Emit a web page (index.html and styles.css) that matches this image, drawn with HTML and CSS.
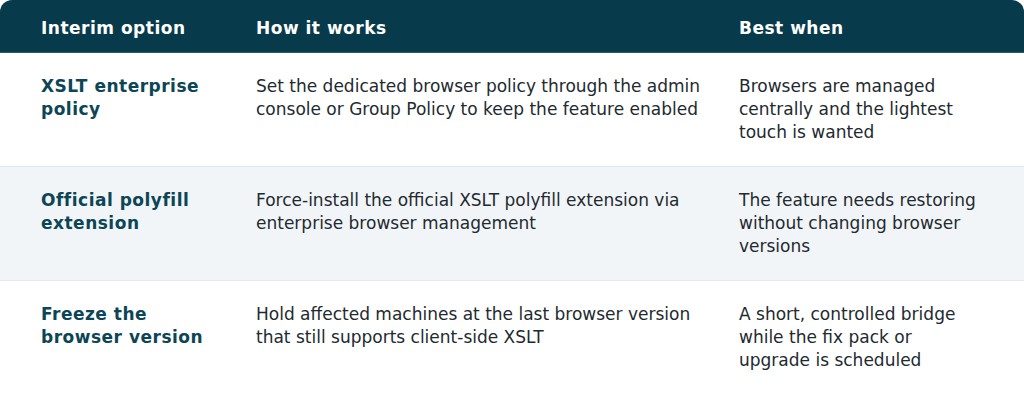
FILE: index.html
```html
<!DOCTYPE html>
<html lang="en">
<head>
    <meta charset="UTF-8">
    <meta name="viewport" content="width=device-width, initial-scale=1.0">
    <title>Interim options</title>
    <link rel="stylesheet" href="styles.css">
</head>
<body>
    <div class="options-table">
        <table>
            <colgroup>
                <col class="col-option">
                <col class="col-how">
                <col class="col-best">
            </colgroup>
            <thead>
                <tr>
                    <th>Interim option</th>
                    <th>How it works</th>
                    <th>Best when</th>
                </tr>
            </thead>
            <tbody>
                <tr>
                    <td class="option-name">XSLT enterprise policy</td>
                    <td>Set the dedicated browser policy through the admin console or Group Policy to keep the feature enabled</td>
                    <td>Browsers are managed centrally and the lightest touch is wanted</td>
                </tr>
                <tr class="alt">
                    <td class="option-name">Official polyfill extension</td>
                    <td>Force-install the official XSLT polyfill extension via enterprise browser management</td>
                    <td>The feature needs restoring without changing browser versions</td>
                </tr>
                <tr>
                    <td class="option-name">Freeze the browser version</td>
                    <td>Hold affected machines at the last browser version that still supports client-side XSLT</td>
                    <td>A short, controlled bridge while the fix pack or upgrade is scheduled</td>
                </tr>
            </tbody>
        </table>
    </div>
</body>
</html>
```

FILE: styles.css
```css
body {
    margin: 0;
    padding: 0;
    background: #ffffff;
    font-family: "DejaVu Sans", sans-serif;
    font-size: 17px;
    color: #222a30;
}
.options-table {
    border-radius: 12px 12px 0 0;
    overflow: hidden;
}
table {
    width: 100%;
    border-collapse: collapse;
    table-layout: fixed;
}
.col-option {
    width: 256px;
}
.col-how {
    width: 483px;
}
.col-best {
    width: 285px;
}
th,
td {
    text-align: left;
    vertical-align: top;
    line-height: 23px;
    padding: 22px 30px 22px 0;
}
th:first-child,
td:first-child {
    padding-left: 41px;
}
th:last-child,
td:last-child {
    padding-right: 42px;
}
thead th {
    background: #073a4b;
    color: #ffffff;
    font-weight: bold;
    letter-spacing: 0.5px;
    padding-top: 17px;
    padding-bottom: 12px;
    border-bottom: 1px solid #2b5b6b;
}
tbody tr {
    border-bottom: 1px solid #e3e8ec;
}
tbody tr:last-child {
    border-bottom: none;
}
tbody tr.alt {
    background: #f2f5f8;
}
.option-name {
    color: #0c4656;
    font-weight: bold;
    letter-spacing: 0.5px;
}
```
